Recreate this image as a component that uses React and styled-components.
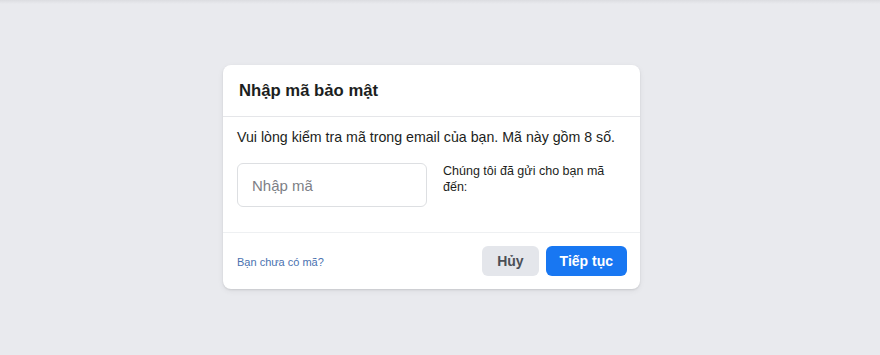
import React from "react";
import styled, { createGlobalStyle } from "styled-components";

const Global = createGlobalStyle`
  html, body { margin: 0; padding: 0; }
  body {
    background: linear-gradient(#dcdde1 0, #e9eaee 4px, #e9eaee 100%);
    min-height: 355px;
    font-family: "Liberation Sans", Arial, Helvetica, sans-serif;
    color: #1c1e21;
  }
`;

const Page = styled.div`
  padding: 65px 0 0 223px;
`;

const Card = styled.div`
  width: 417px;
  background: #fff;
  border-radius: 8px;
  box-shadow: 0 1px 2px rgba(0, 0, 0, 0.1), 0 2px 6px rgba(0, 0, 0, 0.06);
`;

const Header = styled.div`
  height: 51px;
  display: flex;
  align-items: center;
  padding: 0 16px;
  border-bottom: 1px solid #e5e6e9;
`;

const Title = styled.h2`
  margin: 0;
  font-size: 16.7px;
  font-weight: bold;
  color: #1c1e21;
`;

const Body = styled.div`
  padding: 10px 14px 25px 14px;
  border-bottom: 1px solid #eef0f2;
`;

const Lead = styled.p`
  margin: 0;
  font-size: 14.2px;
  line-height: 20px;
  white-space: nowrap;
  color: #1c1e21;
`;

const Row = styled.div`
  display: flex;
  align-items: flex-start;
  gap: 16px;
  margin-top: 16px;
`;

const CodeInput = styled.input`
  width: 190px;
  height: 44px;
  box-sizing: border-box;
  border: 1px solid #dddfe2;
  border-radius: 6px;
  padding: 0 14px;
  font-family: inherit;
  font-size: 15px;
  color: #1c1e21;
  outline: none;
  &::placeholder { color: #7d8086; }
`;

const Note = styled.p`
  margin: 0;
  width: 175px;
  font-size: 12.5px;
  line-height: 16px;
  color: #1c1e21;
`;

const Footer = styled.div`
  display: flex;
  align-items: center;
  padding: 13px 13px 13px 14px;
`;

const Link = styled.a`
  font-size: 11px;
  color: #4a72b0;
  text-decoration: none;
  margin-right: auto;
  margin-top: 2px;
`;

const Button = styled.button`
  height: 30px;
  border: none;
  border-radius: 6px;
  padding: 0 ${(p) => (p.$primary ? "14px" : "15px")};
  margin-left: 7px;
  font-family: inherit;
  font-size: 14px;
  font-weight: bold;
  background: ${(p) => (p.$primary ? "#1877f2" : "#e4e6eb")};
  color: ${(p) => (p.$primary ? "#fff" : "#4b4f56")};
  cursor: pointer;
`;

export default function App() {
  return (
    <>
      <Global />
      <Page>
        <Card>
          <Header>
            <Title>Nhập mã bảo mật</Title>
          </Header>
          <Body>
            <Lead>Vui lòng kiểm tra mã trong email của bạn. Mã này gồm 8 số.</Lead>
            <Row>
              <CodeInput placeholder="Nhập mã" />
              <Note>Chúng tôi đã gửi cho bạn mã đến:</Note>
            </Row>
          </Body>
          <Footer>
            <Link href="#">Bạn chưa có mã?</Link>
            <Button>Hủy</Button>
            <Button $primary>Tiếp tục</Button>
          </Footer>
        </Card>
      </Page>
    </>
  );
}
